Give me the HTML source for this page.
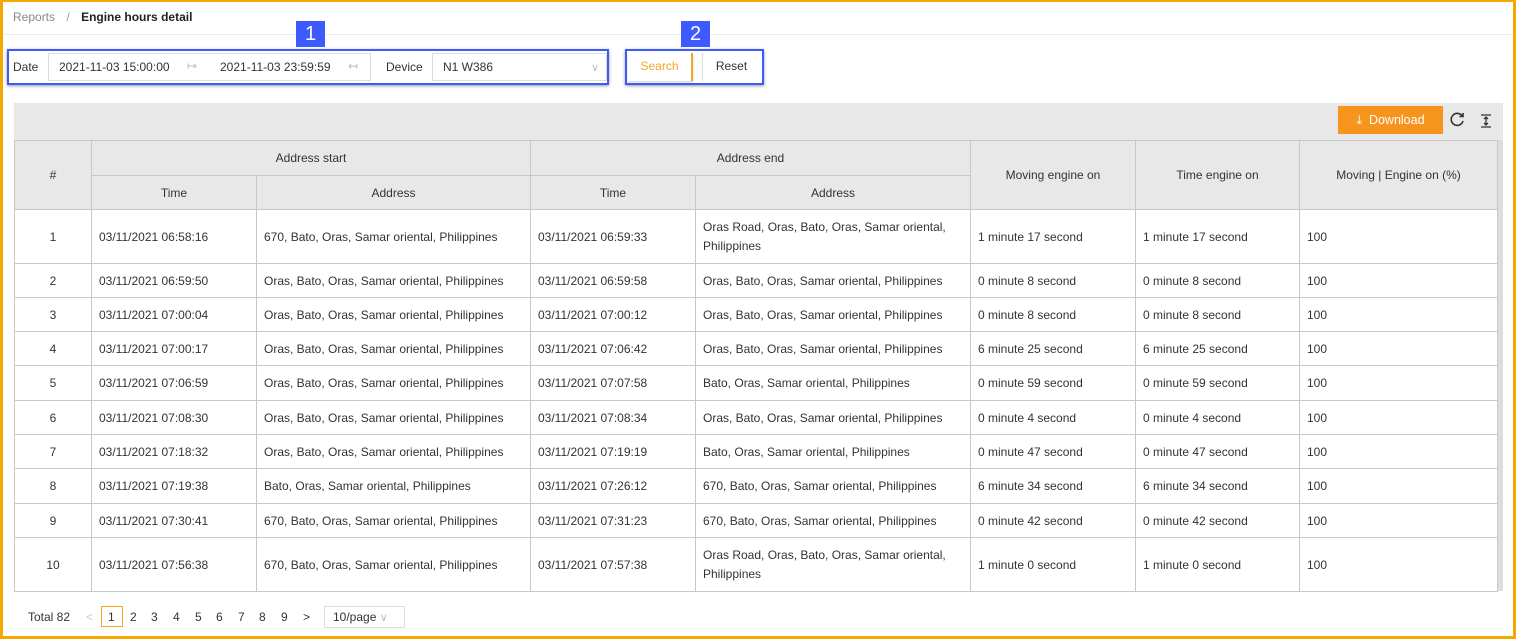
<!DOCTYPE html>
<html><head><meta charset="utf-8"><style>
*{box-sizing:border-box;margin:0;padding:0}
body{width:1516px;height:639px;overflow:hidden;background:#fff;font-family:"Liberation Sans",Arial,sans-serif;font-size:12px;color:#333;position:relative}
.frame{position:absolute;left:0;top:0;width:1516px;height:639px;border:3px solid #f5a800;border-top-width:2px;pointer-events:none;z-index:10}
.abs{position:absolute}
.crumb{left:13px;top:10px;font-size:12px}
.hr{left:3px;right:3px;top:34px;height:1px;background:#eee}
.box{border:2px solid #3d5afe;box-shadow:0 1px 3px rgba(0,0,0,.4)}
.badge{background:#3d5afe;color:#fff;font-size:20px;text-align:center;line-height:26px;width:29px;height:26px}
table{border-collapse:collapse;position:absolute;left:14px;top:140px;table-layout:fixed}
td,th{border:1px solid #c8c8c8;font-weight:normal;padding:0 7px;text-align:left;font-size:12px;color:#333}
th{background:#e8e8e8;text-align:center}
td.c{text-align:center}
.pg span{position:absolute;top:610px;font-size:12px}
</style></head><body>
<div class="frame"></div>
<div class="abs crumb"><span style="color:#888">Reports</span> <span style="color:#999;margin:0 8px">/</span> <b style="color:#222">Engine hours detail</b></div>
<div class="abs hr"></div>

<div class="abs" style="left:8px;top:53px;width:40px;height:28px;line-height:28px;padding-left:5px">Date</div>
<div class="abs" style="left:48px;top:53px;width:323px;height:28px;border:1px solid #ddd;background:#fff"></div>
<div class="abs" style="left:59px;top:60px">2021-11-03 15:00:00</div>
<div class="abs" style="left:187px;top:59px;color:#bbb">↦</div>
<div class="abs" style="left:220px;top:60px">2021-11-03 23:59:59</div>
<div class="abs" style="left:348px;top:59px;color:#bbb">↤</div>
<div class="abs" style="left:386px;top:60px">Device</div>
<div class="abs" style="left:432px;top:53px;width:175px;height:28px;border:1px solid #ddd"></div>
<div class="abs" style="left:443px;top:60px">N1 W386</div>
<div class="abs" style="left:591px;top:61px;color:#bbb;font-size:11px">∨</div>
<div class="abs box" style="left:7px;top:49px;width:602px;height:36px"></div>
<div class="abs badge" style="left:296px;top:21px">1</div>

<div class="abs" style="left:628px;top:53px;width:65px;height:28px;border-right:2px solid #f5a623;color:#f5a623;text-align:center;line-height:26px;box-shadow:0 1px 2px rgba(0,0,0,.2)">Search</div>
<div class="abs" style="left:702px;top:53px;width:58px;height:28px;border-left:1px solid #ddd;text-align:center;line-height:26px">Reset</div>
<div class="abs box" style="left:625px;top:49px;width:139px;height:36px"></div>
<div class="abs badge" style="left:681px;top:21px">2</div>

<div class="abs" style="left:14px;top:103px;width:1489px;height:37px;background:#e8e8e8"></div>
<div class="abs" style="left:1338px;top:106px;width:105px;height:28px;background:#f7941d;color:#fff;font-size:12.5px;line-height:28px;text-align:center">⤓&nbsp; Download</div>
<div class="abs" style="left:1450px;top:112px;width:15px;height:15px;"><svg width="15" height="15" viewBox="0 0 15 15"><path d="M12.5 4.5A6 6 0 1 0 13 9" fill="none" stroke="#333" stroke-width="1.6"/><path d="M9.5 4.5h3.5v-3.5" fill="none" stroke="#333" stroke-width="1.6"/></svg></div>
<div class="abs" style="left:1480px;top:114px"><svg width="12" height="14" viewBox="0 0 12 14"><path d="M1 1h10M1 13h10M6 3v8M4 5l2-2 2 2M4 9l2 2 2-2" fill="none" stroke="#333" stroke-width="1.3"/></svg></div>
<div class="abs" style="left:1497px;top:140px;width:6px;height:451px;background:#ddd"></div>

<table>
<colgroup><col style="width:77px"><col style="width:165px"><col style="width:274px"><col style="width:165px"><col style="width:275px"><col style="width:165px"><col style="width:164px"><col style="width:198px"></colgroup>
<tr style="height:35px"><th rowspan="2">#</th><th colspan="2">Address start</th><th colspan="2">Address end</th><th rowspan="2">Moving engine on</th><th rowspan="2">Time engine on</th><th rowspan="2">Moving | Engine on (%)</th></tr>
<tr style="height:34px"><th>Time</th><th>Address</th><th>Time</th><th>Address</th></tr>
<tr style="height:54px"><td class="c">1</td><td>03/11/2021 06:58:16</td><td>670, Bato, Oras, Samar oriental, Philippines</td><td>03/11/2021 06:59:33</td><td style="line-height:19px">Oras Road, Oras, Bato, Oras, Samar oriental, Philippines</td><td>1 minute 17 second</td><td>1 minute 17 second</td><td>100</td></tr>
<tr style="height:34px"><td class="c">2</td><td>03/11/2021 06:59:50</td><td>Oras, Bato, Oras, Samar oriental, Philippines</td><td>03/11/2021 06:59:58</td><td>Oras, Bato, Oras, Samar oriental, Philippines</td><td>0 minute 8 second</td><td>0 minute 8 second</td><td>100</td></tr>
<tr style="height:34px"><td class="c">3</td><td>03/11/2021 07:00:04</td><td>Oras, Bato, Oras, Samar oriental, Philippines</td><td>03/11/2021 07:00:12</td><td>Oras, Bato, Oras, Samar oriental, Philippines</td><td>0 minute 8 second</td><td>0 minute 8 second</td><td>100</td></tr>
<tr style="height:34px"><td class="c">4</td><td>03/11/2021 07:00:17</td><td>Oras, Bato, Oras, Samar oriental, Philippines</td><td>03/11/2021 07:06:42</td><td>Oras, Bato, Oras, Samar oriental, Philippines</td><td>6 minute 25 second</td><td>6 minute 25 second</td><td>100</td></tr>
<tr style="height:35px"><td class="c">5</td><td>03/11/2021 07:06:59</td><td>Oras, Bato, Oras, Samar oriental, Philippines</td><td>03/11/2021 07:07:58</td><td>Bato, Oras, Samar oriental, Philippines</td><td>0 minute 59 second</td><td>0 minute 59 second</td><td>100</td></tr>
<tr style="height:34px"><td class="c">6</td><td>03/11/2021 07:08:30</td><td>Oras, Bato, Oras, Samar oriental, Philippines</td><td>03/11/2021 07:08:34</td><td>Oras, Bato, Oras, Samar oriental, Philippines</td><td>0 minute 4 second</td><td>0 minute 4 second</td><td>100</td></tr>
<tr style="height:34px"><td class="c">7</td><td>03/11/2021 07:18:32</td><td>Oras, Bato, Oras, Samar oriental, Philippines</td><td>03/11/2021 07:19:19</td><td>Bato, Oras, Samar oriental, Philippines</td><td>0 minute 47 second</td><td>0 minute 47 second</td><td>100</td></tr>
<tr style="height:35px"><td class="c">8</td><td>03/11/2021 07:19:38</td><td>Bato, Oras, Samar oriental, Philippines</td><td>03/11/2021 07:26:12</td><td>670, Bato, Oras, Samar oriental, Philippines</td><td>6 minute 34 second</td><td>6 minute 34 second</td><td>100</td></tr>
<tr style="height:34px"><td class="c">9</td><td>03/11/2021 07:30:41</td><td>670, Bato, Oras, Samar oriental, Philippines</td><td>03/11/2021 07:31:23</td><td>670, Bato, Oras, Samar oriental, Philippines</td><td>0 minute 42 second</td><td>0 minute 42 second</td><td>100</td></tr>
<tr style="height:54px"><td class="c">10</td><td>03/11/2021 07:56:38</td><td>670, Bato, Oras, Samar oriental, Philippines</td><td>03/11/2021 07:57:38</td><td style="line-height:19px">Oras Road, Oras, Bato, Oras, Samar oriental, Philippines</td><td>1 minute 0 second</td><td>1 minute 0 second</td><td>100</td></tr>
</table>

<div class="pg">
<span style="left:28px">Total 82</span>
<span style="left:86px;color:#ccc">&lt;</span>
<div class="abs" style="left:101px;top:606px;width:22px;height:21px;border:1px solid #f5a623"></div>
<span style="left:108px">1</span><span style="left:130px">2</span><span style="left:151px">3</span><span style="left:173px">4</span><span style="left:195px">5</span><span style="left:216px">6</span><span style="left:238px">7</span><span style="left:259px">8</span><span style="left:281px">9</span>
<span style="left:303px">&gt;</span>
</div>
<div class="abs" style="left:324px;top:606px;width:81px;height:22px;border:1px solid #ddd;padding-left:8px;line-height:20px">10/page <span style="color:#bbb;font-size:11px">∨</span></div>
</body></html>
